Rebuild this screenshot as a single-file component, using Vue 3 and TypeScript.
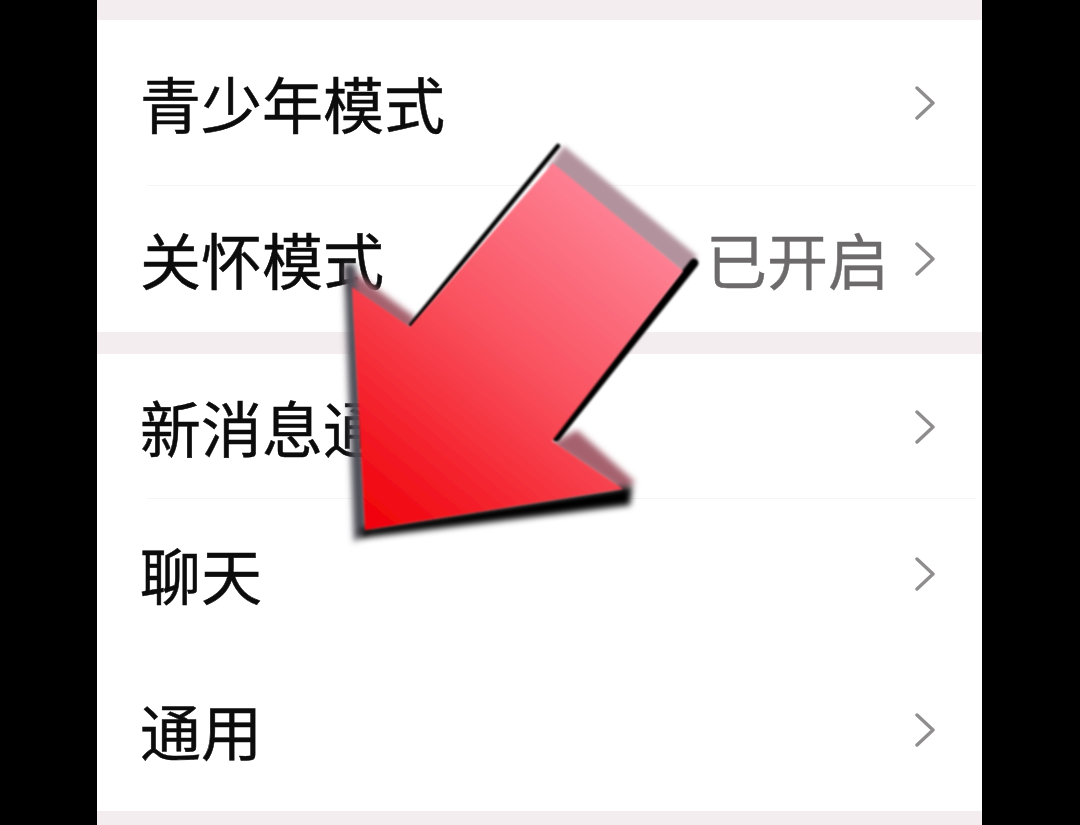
<script setup lang="ts">
interface Row { label: string; value?: string; height: number; divided?: boolean }
const groups: Row[][] = [
  [
    { label: '青少年模式', height: 166, divided: true },
    { label: '关怀模式', value: '已开启', height: 146 },
  ],
  [
    { label: '新消息通知', height: 145, divided: true },
    { label: '聊天', height: 150 },
    { label: '通用', height: 162 },
  ],
]
</script>

<template>
  <div class="stage">
    <main class="panel">
      <div class="band band-top"></div>
      <template v-for="(group, g) in groups" :key="g">
        <section class="group">
          <div
            v-for="row in group"
            :key="row.label"
            class="row"
            :class="{ divided: row.divided }"
            :style="{ height: row.height + 'px' }"
          >
            <span class="label">{{ row.label }}</span>
            <span v-if="row.value" class="value">{{ row.value }}</span>
            <svg class="chevron" viewBox="0 0 20 34" width="20" height="34" aria-hidden="true">
              <path d="M2 2 L18 17 L2 32" />
            </svg>
          </div>
        </section>
        <div class="band" :class="g === 0 ? 'band-mid' : 'band-end'"></div>
      </template>
    </main>

    <svg class="arrow" viewBox="0 0 1080 825" width="1080" height="825" aria-hidden="true">
      <defs>
        <linearGradient id="arrowFill" gradientUnits="userSpaceOnUse" x1="640" y1="215" x2="375" y2="530">
          <stop offset="0" stop-color="#fe8497" />
          <stop offset="0.45" stop-color="#f9525f" />
          <stop offset="1" stop-color="#f10008" />
        </linearGradient>
        <filter id="soft" x="-20%" y="-20%" width="140%" height="140%"><feGaussianBlur stdDeviation="1" /></filter>
        <filter id="mid" x="-20%" y="-20%" width="140%" height="140%"><feGaussianBlur stdDeviation="2.4" /></filter>
        <filter id="wide" x="-30%" y="-30%" width="160%" height="160%"><feGaussianBlur stdDeviation="3" /></filter>
      </defs>
      <!-- soft bevel bands -->
      <polygon points="564,146 697,256 685,276 548,168" fill="#b2939d" filter="url(#mid)" />
      <polygon points="346,266 416,318 408,332 350,292" fill="#a5626e" filter="url(#wide)" />
      <polygon points="577,430 635,482 622,492 550,444" fill="#a5626e" filter="url(#wide)" />
      <polygon points="344,264 355,264 368,532 354,542" fill="#4e4e56" filter="url(#wide)" />
      <!-- dark bevel bands -->
      <polygon points="362,528 632,486 630,505 360,538" fill="#000" filter="url(#wide)" />
      <polyline points="411,325 558,146" class="edge" stroke="#000" stroke-width="4.5" filter="url(#soft)" />
      <polyline points="556,437 694,263" class="edge" stroke="#000" stroke-width="9" filter="url(#soft)" />
      <!-- face -->
      <polygon points="553,163 683,271 552,441 623,489 365,530 352,287 410,327" fill="url(#arrowFill)" filter="url(#soft)" />
    </svg>
  </div>
</template>

<style>
html, body { margin: 0; background: #000; }
</style>

<style scoped>
.stage {
  position: relative;
  width: 1080px;
  height: 825px;
  overflow: hidden;
  background: #000;
  font-family: "Noto Sans CJK SC", "Noto Sans", sans-serif;
}
.panel {
  width: 885px;
  height: 825px;
  margin-left: 97px;
  display: flex;
  flex-direction: column;
  background: #fff;
}
.band { flex: none; background: #f4edf0; }
.band-top { height: 20px; }
.band-mid { height: 22px; }
.band-end { height: 14px; }
.group { flex: none; background: #fff; }
.row {
  box-sizing: border-box;
  display: flex;
  align-items: center;
  padding: 0 47px 0 43px;
  position: relative;
}
.row.divided::after {
  content: "";
  position: absolute;
  left: 50px;
  right: 6px;
  bottom: 0;
  height: 1px;
  background: #f6f4f5;
}
.label {
  flex: 1;
  font-size: 61px;
  line-height: 70px;
  color: #0c0c0c;
  -webkit-text-stroke: 0.5px #0c0c0c;
}
.value {
  font-size: 61px;
  line-height: 70px;
  color: #6c6a6b;
  margin-right: 26px;
  -webkit-text-stroke: 0.4px #6c6a6b;
}
.chevron { flex: none; }
.chevron path {
  fill: none;
  stroke: #8f8d8e;
  stroke-width: 3.4;
  stroke-linecap: round;
  stroke-linejoin: round;
}
.arrow {
  position: absolute;
  inset: 0;
  pointer-events: none;
}
.edge { fill: none; stroke-linecap: round; }
</style>
